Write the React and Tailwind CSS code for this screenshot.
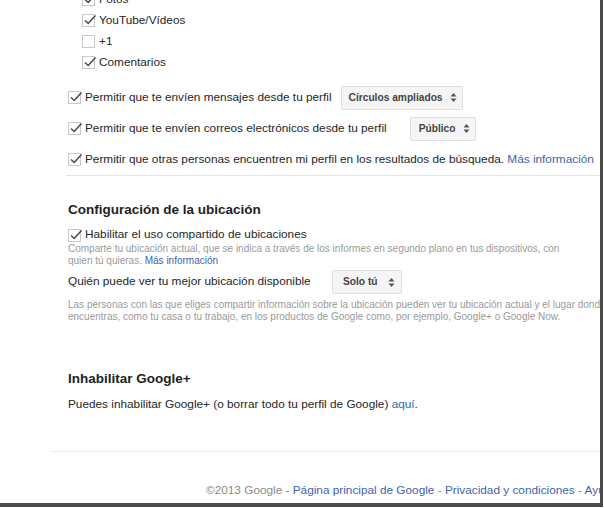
import React from 'react'

const Check = ({ checked = true }) => (
  <span className="relative inline-block w-[13px] h-[13px] border border-[#c8c8c8] bg-white shrink-0">
    {checked && (
      <svg className="absolute left-[0px] top-[-2px]" width="14" height="14" viewBox="0 0 14 14">
        <path d="M2 7.5 L5.2 10.5 L12.5 2.5" fill="none" stroke="#4a4a4a" strokeWidth="1.5" />
      </svg>
    )}
  </span>
)

const Arrows = () => (
  <svg width="7" height="11" viewBox="0 0 7 11" className="shrink-0">
    <path d="M0.5 4.5 L3.5 1 L6.5 4.5 Z" fill="#555" />
    <path d="M0.5 6.5 L3.5 10 L6.5 6.5 Z" fill="#555" />
  </svg>
)

const Picker = ({ label, className }) => (
  <div className={`h-[24px] flex items-center shrink-0 bg-[#f5f5f5] border border-[#dedede] rounded-[2px] text-[10.2px] font-bold text-[#444] ${className}`}>
    <span>{label}</span>
    <Arrows />
  </div>
)

const Option = ({ label, checked }) => (
  <div className="h-[21px] flex items-center gap-[4px]">
    <Check checked={checked} />
    <span>{label}</span>
  </div>
)

const Link = ({ children }) => <span className="text-[#3d63b0]">{children}</span>

export default function App() {
  return (
    <div className="w-[604px] h-[508px] bg-white overflow-hidden" style={{ fontFamily: '"Liberation Sans", Arial, sans-serif' }}>
      <div className="w-[603px] h-[507px] border-r-[3px] border-b-[4px] border-[#4b4b4b] overflow-hidden text-[11.8px] text-[#262626] relative whitespace-nowrap">
        <div className="pl-[82px] -mt-[11px]">
          <Option label="Fotos" />
          <Option label="YouTube/Vídeos" />
          <Option label="+1" checked={false} />
          <Option label="Comentarios" />
        </div>

        <div className="pl-[68px] mt-[9px]">
          <div className="h-[31px] flex items-center gap-[4px]">
            <Check />
            <span>Permitir que te envíen mensajes desde tu perfil</span>
            <Picker label="Círculos ampliados" className="ml-[5px] pl-[7px] pr-[5px] gap-[7px]" />
          </div>
          <div className="h-[31px] flex items-center gap-[4px]">
            <Check />
            <span>Permitir que te envíen correos electrónicos desde tu perfil</span>
            <Picker label="Público" className="ml-[19px] pl-[8px] pr-[5px] gap-[8px]" />
          </div>
          <div className="h-[31px] flex items-center gap-[4px]">
            <Check />
            <span>
              Permitir que otras personas encuentren mi perfil en los resultados de búsqueda. <Link>Más información</Link>
            </span>
          </div>
        </div>
        <div className="ml-[66px] border-t border-[#e6e6e6]" />

        <div className="pl-[68px]">
          <h2 className="mt-[25px] h-[18px] leading-[18px] text-[13.5px] font-bold text-[#222]">Configuración de la ubicación</h2>
          <div className="mt-[8px] h-[16px] flex items-center gap-[4px]">
            <Check />
            <span>Habilitar el uso compartido de ubicaciones</span>
          </div>
          <p className="text-[10px] leading-[12px] text-[#9a9a9a]">
            Comparte tu ubicación actual, que se indica a través de los informes en segundo plano en tus dispositivos, con
            <br />
            quien tú quieras. <Link>Más información</Link>
          </p>
          <div className="mt-[3px] h-[24px] flex items-center">
            <span className="w-[264px]">Quién puede ver tu mejor ubicación disponible</span>
            <Picker label="Solo tú" className="pl-[10px] pr-[6px] gap-[10px]" />
          </div>
          <p className="mt-[5px] text-[10px] leading-[12px] text-[#9a9a9a]">
            Las personas con las que eliges compartir información sobre la ubicación pueden ver tu ubicación actual y el lugar donde te
            <br />
            encuentras, como tu casa o tu trabajo, en los productos de Google como, por ejemplo, Google+ o Google Now.
          </p>

          <h2 className="mt-[47px] h-[18px] leading-[18px] text-[13.5px] font-bold text-[#222]">Inhabilitar Google+</h2>
          <p className="mt-[8px] leading-[16px]">
            Puedes inhabilitar Google+ (o borrar todo tu perfil de Google) <Link>aquí</Link>.
          </p>
        </div>

        <div className="ml-[50px] mt-[39px] border-t border-[#ececec]" />

        <div className="mt-[30px] pl-[206px] leading-[16px] text-[11.8px] text-[#8a8a8a]">
          ©2013 Google - <Link>Página principal de Google</Link> - <Link>Privacidad y condiciones</Link> - <Link>Ayuda</Link>
        </div>
      </div>
    </div>
  )
}
